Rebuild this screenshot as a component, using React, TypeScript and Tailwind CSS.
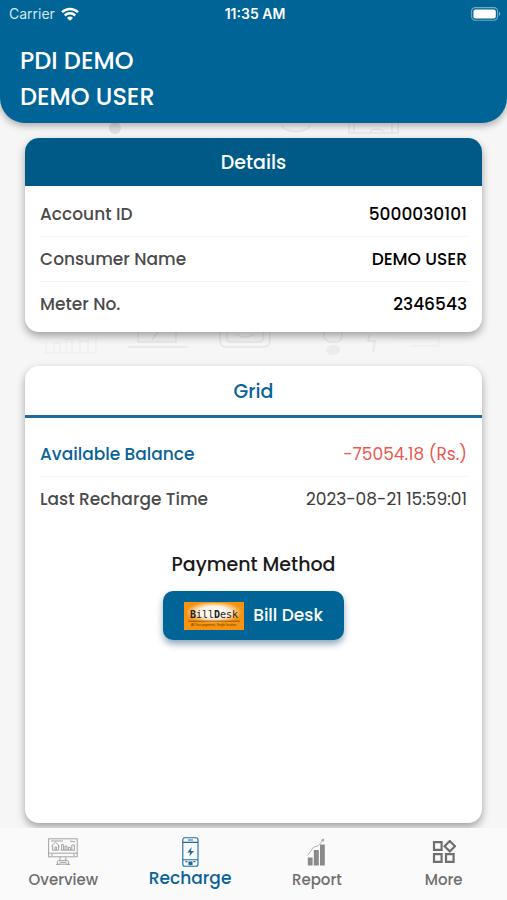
import type { ReactNode } from 'react';

interface RowProps {
  label: string;
  value: string;
  labelClass?: string;
  valueClass?: string;
}

const DETAILS = [
  { label: 'Account ID', value: '5000030101' },
  { label: 'Consumer Name', value: 'DEMO USER' },
  { label: 'Meter No.', value: '2346543' },
];

function Row({
  label,
  value,
  labelClass = 'text-[#4b4b4b]',
  valueClass = 'font-medium text-black',
}: RowProps) {
  return (
    <div className="flex h-[45px] items-center justify-between border-b border-[#f3f3f3] pt-px last:border-0">
      <dt className={`font-medium ${labelClass}`}>{label}</dt>
      <dd className={valueClass}>{value}</dd>
    </div>
  );
}

function WifiIcon() {
  return (
    <svg viewBox="0 0 18 14" className="h-[14px] w-[18px]" aria-hidden="true">
      <g fill="none" stroke="#fff" strokeWidth="2.5">
        <path d="M1 5.2a11.6 11.6 0 0 1 16 0" />
        <path d="M3.8 8.5a7.4 7.4 0 0 1 10.4 0" />
      </g>
      <path d="M9 13.8 6 10.9a4.4 4.4 0 0 1 6 0z" fill="#fff" />
    </svg>
  );
}

function BatteryIcon() {
  return (
    <svg viewBox="0 0 30 14" className="h-[14px] w-[30px]" aria-hidden="true">
      <rect x=".6" y=".6" width="26" height="12.6" rx="3.6" fill="none" stroke="#fff" strokeOpacity=".45" strokeWidth="1.1" />
      <rect x="2.4" y="2.4" width="22.4" height="9" rx="2" fill="#fff" />
      <path d="M28 4.8c1.8.8 1.8 3.4 0 4.2z" fill="#fff" fillOpacity=".5" />
    </svg>
  );
}

function OverviewIcon() {
  return (
    <svg viewBox="0 0 30 28" className="h-[28px] w-[30px]" fill="none" stroke="#a3a3a3" strokeWidth="1" aria-hidden="true">
      <rect x=".6" y=".8" width="28.6" height="18" />
      <path d="M.6 15.2h28.6M3 3h12M22 3l5 1M3 17h2M25 17h2" />
      <path d="m3.4 8.2 4.1-4 4.1 4M4.6 7.4v4.8h6V7.4M7 12V9h1.4v3" />
      <path d="M13.6 12V6.6h2V12M17 12V8h2v4M20.4 12V9.4h2V12M23.8 12V7h2.6v5M12.6 12.2h14.4" />
      <path d="M12 19v3.6M17.8 19v3.6M9.4 26.2v-2.4c0-1 .6-1.2 1.4-1.2h8.4c.8 0 1.4.3 1.4 1.2v2.4z" />
      <path d="M8 26.4h3.6M18.4 26.4H22M11.6 24.4h7" />
    </svg>
  );
}

function RechargeIcon() {
  return (
    <svg viewBox="0 0 17 30" className="h-[30px] w-[17px]" fill="none" stroke="#1b6c9c" strokeWidth="1.1" aria-hidden="true">
      <rect x=".8" y=".8" width="15.2" height="28.4" rx="2" />
      <path d="M.8 5.4H16M.8 22.8H16M6 3h5M3.4 24.6h2M11.4 24.6h2" />
      <rect x="7" y="25" width="3" height="2.6" fill="#1b6c9c" />
      <path d="m9.8 10-4.6 5.4h3l-1 4.2 4.8-5.6H8.8z" fill="#1b6c9c" stroke="none" />
    </svg>
  );
}

function ReportIcon() {
  return (
    <svg viewBox="0 0 19 28" className="h-[28px] w-[19px]" aria-hidden="true">
      <path d="M.8 19.4h4.8v8.2H.8zM6.8 12h5v15.6h-5zM13 6.4h4.8v21.2H13z" fill="#8a8a8a" />
      <path d="M.6 17.4 6.8 9l4.4-1.2L16 2" fill="none" stroke="#b4b4b4" strokeWidth="1" />
      <path d="m13.6 2 3.6-1.6L16.6 4z" fill="#a3a3a3" />
    </svg>
  );
}

function MoreIcon() {
  return (
    <svg viewBox="0 0 24 24" className="h-6 w-6" fill="none" stroke="#6f6f6f" strokeWidth="2.2" aria-hidden="true">
      <path d="M2 2.2h7.6v7.6H2zM2 14.2h7.6v7.6H2zM14 14.2h7.6v7.6H14zM17.8 1l5.2 5.2-5.2 5.2-5.2-5.2z" />
    </svg>
  );
}

function BillDeskLogo() {
  return (
    <svg viewBox="0 0 60 28" className="h-[28px] w-[60px]" role="img" aria-label="BillDesk">
      <defs>
        <radialGradient id="glow" cx=".5" cy=".42" r=".5">
          <stop offset="0" stopColor="#fff" />
          <stop offset=".55" stopColor="#fdf3e2" />
          <stop offset="1" stopColor="#f7930f" />
        </radialGradient>
      </defs>
      <rect width="60" height="28" fill="#f7930f" />
      <rect x="2" y="1" width="56" height="22" fill="url(#glow)" />
      <text x="30" y="16" textAnchor="middle" fontSize="10" fontFamily="DejaVu Sans Mono, monospace" fill="#222">
        <tspan fontWeight="bold">B</tspan>ill<tspan fontWeight="bold">D</tspan>esk
      </text>
      <path d="M4 19.2h52" stroke="#7a4a10" strokeWidth=".8" />
      <text x="30" y="24" textAnchor="middle" fontSize="3" fontFamily="Liberation Sans, sans-serif" fill="#5d3608">
        All Your payments. Single location.
      </text>
    </svg>
  );
}

// Faint household sketches behind the cards
function Backdrop() {
  return (
    <div className="pointer-events-none absolute inset-x-0 top-0 -z-10 flex justify-center" aria-hidden="true">
      <svg viewBox="0 0 507 360" className="h-[360px] w-[507px]" fill="none" stroke="#e6e6e6" strokeWidth="1.5">
        <ellipse cx="115" cy="128" rx="6" ry="6" fill="#e0dede" stroke="none" />
        <path d="M282 124c0 10 28 10 28 0" />
        <path d="M349 122v11h49v-11M354 122v11M392 122v11M370 133c0-5 14-5 14 0" />
        <path d="M46 342v11h50v-16M54 353v-10h6v10M66 353v-14h6v14M80 353v-12h8v12" stroke="#efefef" />
        <path d="M138 330v12h38v-12M152 340l6-8M128 347h60" />
        <path d="M220 328v12q0 7 7 7h36q7 0 7-7v-12M227 328v10q0 4 4 4h28q4 0 4-4v-10M236 334q9 6 18 0" />
        <path d="M324 332v6l5 4h9l4-4v-6" />
        <ellipse cx="333" cy="350" rx="7" ry="5" fill="#ebebeb" stroke="none" />
        <path d="m370 334-2 7h7l-2 11" />
        <path d="M394 338h45M410 346h29v-10" stroke="#efefef" />
      </svg>
    </div>
  );
}

function NavItem({ label, icon, active = false }: { label: string; icon: ReactNode; active?: boolean }) {
  return (
    <a
      href={`#${label.toLowerCase()}`}
      aria-current={active ? 'page' : undefined}
      className={`flex flex-1 flex-col items-center ${active ? 'text-[17px] text-[#0a6396]' : 'text-[15px] text-[#6f6f6f]'}`}
    >
      <span className="flex h-8 items-center">{icon}</span>
      <span className={`leading-6 font-medium ${active ? '-mt-0.5' : ''}`}>{label}</span>
    </a>
  );
}

export default function App() {
  return (
    <div className="relative isolate flex min-h-screen flex-col bg-[#f6f6f6] font-['Poppins','Inter',sans-serif] text-[17px]">
      <Backdrop />

      <header className="rounded-b-[25px] bg-[#006496] pb-2 text-white shadow-[0_3px_7px_rgba(0,0,0,0.3)]">
        <div className="grid h-7 grid-cols-3 items-center pr-[6px] pl-[9px] font-['Inter',sans-serif] text-sm">
          <div className="flex items-center gap-[6px] text-[#d5e6ef]">
            Carrier <WifiIcon />
          </div>
          <div className="text-center font-semibold">11:35 AM</div>
          <div className="flex justify-end">
            <BatteryIcon />
          </div>
        </div>
        <h1 className="px-5 pt-[15px] text-2xl leading-9 font-medium">
          PDI DEMO
          <br />
          DEMO USER
        </h1>
      </header>

      <main className="flex flex-1 flex-col gap-[34px] px-[25px] pt-[15px] pb-[5px]">
        <section className="overflow-hidden rounded-[14px] bg-white shadow-[0_4px_8px_rgba(0,0,0,0.35)]">
          <h2 className="flex h-12 items-center justify-center bg-[#005a87] pt-[2px] text-[19px] font-medium text-white">
            Details
          </h2>
          <dl className="px-[15px] pt-[6px] pb-[5px]">
            {DETAILS.map((item) => (
              <Row key={item.label} label={item.label} value={item.value} />
            ))}
          </dl>
        </section>

        <section className="flex flex-1 flex-col overflow-hidden rounded-[14px] bg-white shadow-[0_4px_8px_rgba(0,0,0,0.35)]">
          <h2 className="flex h-[52px] items-center justify-center border-b-3 border-[#1a6c9b] pt-[3px] text-[19px] font-medium text-[#0a6396]">
            Grid
          </h2>
          <dl className="px-[15px] pt-[14px]">
            <Row
              label="Available Balance"
              value="-75054.18 (Rs.)"
              labelClass="text-[#0a6396]"
              valueClass="text-[#e9594f]"
            />
            <Row label="Last Recharge Time" value="2023-08-21 15:59:01" valueClass="text-[#3c3c3c]" />
          </dl>
          <div className="flex flex-col items-center gap-3 pt-[29px]">
            <h3 className="text-[19px] leading-7 font-medium text-[#1b1b1b]">Payment Method</h3>
            <button
              type="button"
              className="flex h-[49px] items-center gap-[9px] rounded-[10px] bg-[#006496] px-[21px] font-medium text-white shadow-[0_4px_7px_rgba(0,60,100,0.45)]"
            >
              <BillDeskLogo />
              Bill Desk
            </button>
          </div>
        </section>
      </main>

      <nav className="flex h-[72px] bg-[#fafafa] pt-2">
        <NavItem label="Overview" icon={<OverviewIcon />} />
        <NavItem label="Recharge" icon={<RechargeIcon />} active />
        <NavItem label="Report" icon={<ReportIcon />} />
        <NavItem label="More" icon={<MoreIcon />} />
      </nav>
    </div>
  );
}
